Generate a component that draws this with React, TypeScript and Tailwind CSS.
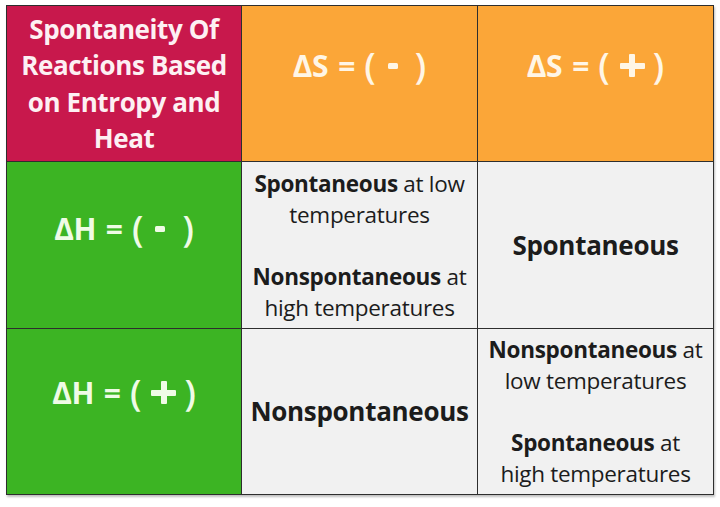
function Delta({ label, sign }: { label: string; sign: '-' | '+' }) {
  return (
    <div className="flex items-center h-[36px]">
      <span className="text-[30px] font-bold leading-none tracking-[-0.5px]">{label}</span>
      <span className="ml-[10px] text-[30px] font-bold leading-none">=</span>
      <span className="ml-[9px] text-[36px] font-semibold leading-none">(</span>
      {sign === '-' ? (
        <span className="ml-[12px] mr-[17px] inline-block w-[10px] h-[6px] bg-current rounded-[1.5px]" />
      ) : (
        <span className="ml-[10px] mr-[8px] relative inline-block w-[25px] h-[23px]">
          <span className="absolute left-0 top-[8.5px] w-[25px] h-[6px] bg-current rounded-[1px]" />
          <span className="absolute left-[9.5px] top-0 w-[6px] h-[23px] bg-current rounded-[1px]" />
        </span>
      )}
      <span className="text-[36px] font-semibold leading-none">)</span>
    </div>
  );
}

export default function App() {
  const font = { fontFamily: '"Open Sans", Lato, "Liberation Sans", sans-serif' };
  return (
    <div className="w-[720px] h-[507px] bg-white pl-[6px] pt-[5px]" style={font}>
      <div className="grid grid-cols-[234px_235px_235px] grid-rows-[155px_166px_165px] gap-px bg-[#2e2e2e] border border-[#2e2e2e] w-[708px] shadow-[1px_2px_2px_rgba(0,0,0,0.25)]">
        <div className="bg-[#c8184c] flex items-center justify-center text-center text-[#fdf0f3] font-bold text-[26px] leading-[36.5px] tracking-[-0.4px] whitespace-nowrap">
          <div>Spontaneity Of<br />Reactions Based<br />on Entropy and<br />Heat</div>
        </div>
        <div className="bg-[#fba638] flex items-center justify-center pb-[36px] text-[#fff6e6]">
          <Delta label="ΔS" sign="-" />
        </div>
        <div className="bg-[#fba638] flex items-center justify-center pb-[36px] text-[#fff6e6]">
          <Delta label="ΔS" sign="+" />
        </div>

        <div className="bg-[#3cb423] flex items-center justify-center pb-[32px] text-[#effbe6]">
          <Delta label="ΔH" sign="-" />
        </div>
        <div className="bg-[#f1f1f1] flex items-center justify-center text-center text-[#1c1c1c] text-[22.5px] leading-[31px] tracking-[-0.3px] whitespace-nowrap">
          <div>
            <b className="font-bold">Spontaneous</b> at low<br />temperatures<br /><br /><b className="font-bold">Nonspontaneous</b> at<br />high temperatures
          </div>
        </div>
        <div className="bg-[#f1f1f1] flex items-center justify-center text-[#1c1c1c] font-bold text-[26px] tracking-[-0.3px]">
          Spontaneous
        </div>

        <div className="bg-[#3cb423] flex items-center justify-center pb-[38px] text-[#effbe6]">
          <Delta label="ΔH" sign="+" />
        </div>
        <div className="bg-[#f1f1f1] flex items-center justify-center text-[#1c1c1c] font-bold text-[26px] tracking-[-0.3px]">
          Nonspontaneous
        </div>
        <div className="bg-[#f1f1f1] flex items-center justify-center text-center text-[#1c1c1c] text-[22.5px] leading-[31px] tracking-[-0.3px] whitespace-nowrap">
          <div>
            <b className="font-bold">Nonspontaneous</b> at<br />low temperatures<br /><br /><b className="font-bold">Spontaneous</b> at<br />high temperatures
          </div>
        </div>
      </div>
    </div>
  );
}
